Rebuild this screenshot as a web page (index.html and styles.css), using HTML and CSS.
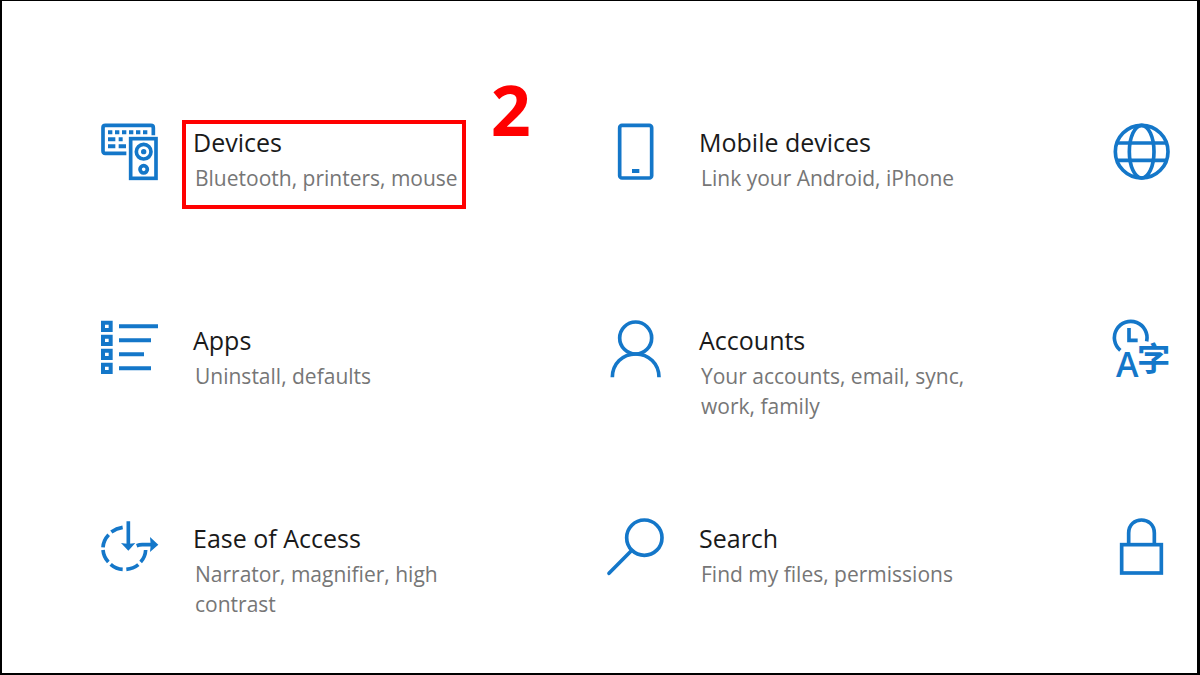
FILE: index.html
```
<!DOCTYPE html>
<html lang="en">
<head>
  <meta charset="UTF-8" />
  <meta name="viewport" content="width=device-width, initial-scale=1.0"/>
  <title>Settings</title>
  <link rel="stylesheet" href="styles.css">
</head>
<body>
  <main class="settings">
    <a class="category" href="#devices">
      <svg class="icon" viewBox="30 36 180 180" aria-hidden="true">
        <path d="M109 130H46q-7 0-7-7V53q0-7 7-7h137q7 0 7 7v23"/>
        <path d="M54 67h13M75 67h13M96 67h13M117 67h13M138 67h13M159 67h13M54 88h22M86 88h12M54 109h22M86 109h22" stroke-width="12"/>
        <rect x="122" y="86" width="76" height="119"/>
        <circle cx="161" cy="125" r="22"/>
        <circle class="solid" cx="161" cy="125" r="8"/>
        <circle cx="161" cy="178" r="11"/>
      </svg>
      <span class="text highlight">
        <span class="name">Devices</span>
        <span class="info">Bluetooth, printers, mouse</span>
        <strong class="step">2</strong>
      </span>
    </a>

    <a class="category" href="#mobile">
      <svg class="icon" viewBox="18 36 180 180" aria-hidden="true">
        <rect x="59" y="46" width="96" height="158" rx="7"/>
        <path d="M96 183h22" stroke-width="12"/>
      </svg>
      <span class="text">
        <span class="name">Mobile devices</span>
        <span class="info">Link your Android, iPhone</span>
      </span>
    </a>

    <a class="category" href="#network" aria-label="Network">
      <svg class="icon" viewBox="36 36 180 180" aria-hidden="true">
        <circle cx="125" cy="125" r="79"/>
        <ellipse cx="125" cy="125" rx="37" ry="79"/>
        <path d="M49 99h152M49 151h152"/>
      </svg>
    </a>

    <a class="category" href="#apps">
      <svg class="icon" viewBox="30 30 180 180" aria-hidden="true">
        <path d="M39 38h23v22H39zM39 80h23v22H39zM39 122h23v22H39zM39 164h23v22H39z" stroke-width="12"/>
        <path d="M87 49h117M87 91h96M87 133h75M87 175h96" stroke-width="12"/>
      </svg>
      <span class="text">
        <span class="name">Apps</span>
        <span class="info">Uninstall, defaults</span>
      </span>
    </a>

    <a class="category" href="#accounts">
      <svg class="icon" viewBox="18 30 180 180" aria-hidden="true">
        <circle cx="107" cy="84" r="48"/>
        <path d="M37 202c0-41 31-70 70-70s70 29 70 70"/>
      </svg>
      <span class="text">
        <span class="name">Accounts</span>
        <span class="info">Your accounts, email, sync, work, family</span>
      </span>
    </a>

    <a class="category" href="#language" aria-label="Time and Language">
      <svg class="icon" viewBox="36 30 180 180" aria-hidden="true">
        <path d="M61 121A49 49 0 1 1 140 94M87 54v37h26"/>
        <text class="latin" x="82" y="202">A</text>
        <text class="hanzi" x="161" y="182">字</text>
      </svg>
    </a>

    <a class="category" href="#access">
      <svg class="icon" viewBox="30 39 180 180" aria-hidden="true">
        <path d="M98 67Q79 70 64 81M56 89Q40 106 39 127M39 135Q41 156 55 171M62 178Q78 192 98 193M109 193Q130 191 145 179M152 171Q166 156 167 135"/>
        <path d="M115 49v71M140 122q8-3 17-3h34"/>
        <path class="solid" d="M93 114q22 4 43 0l-21 23zM180 96l25 23-25 22q4-22 0-45z"/>
      </svg>
      <span class="text">
        <span class="name">Ease of Access</span>
        <span class="info">Narrator, magnifier, high contrast</span>
      </span>
    </a>

    <a class="category" href="#search">
      <svg class="icon" viewBox="18 39 180 180" aria-hidden="true">
        <circle cx="133" cy="98" r="53"/>
        <path d="M94 137L27 205" stroke-linecap="round"/>
      </svg>
      <span class="text">
        <span class="name">Search</span>
        <span class="info">Find my files, permissions</span>
      </span>
    </a>

    <a class="category" href="#privacy" aria-label="Privacy">
      <svg class="icon" viewBox="36 39 180 180" aria-hidden="true">
        <rect x="65" y="119" width="119" height="85"/>
        <path d="M86 117V84c0-52 77-52 77 0v33"/>
      </svg>
    </a>
  </main>
</body>
</html>
```

FILE: styles.css
```
* { margin: 0; padding: 0; box-sizing: border-box; }

body {
  background: #fff;
  color: #1a1a1a;
  font-family: "Open Sans", "Noto Sans", sans-serif;
}

/* Settings grid, last column only has room for the icon */
.settings {
  display: grid;
  grid-template-columns: 1fr 1fr 60px;
  grid-auto-rows: minmax(101px, auto);
  row-gap: 97px;
  min-height: 100vh;
  padding: 121px 25px 40px 98px;
  border: solid #000;
  border-width: 1px 3px 2px 2px;
  align-content: start;
}

.category {
  display: flex;
  align-items: flex-start;
  gap: 33px;
  color: inherit;
  text-decoration: none;
}

/* Icons */
.icon {
  flex: none;
  width: 60px;
  height: 60px;
  overflow: visible;
  fill: none;
  stroke: #1477c9;
  stroke-width: 11;
}
.icon .solid, .icon text { fill: #1477c9; stroke: none; }
.icon text { text-anchor: middle; }
.latin { font-size: 102px; font-weight: 600; }
.hanzi { font-family: "Noto Sans CJK SC", sans-serif; font-size: 100px; font-weight: 700; }

/* Labels */
.text { position: relative; max-width: 280px; padding-top: 2px; }
.name, .info { display: block; }
.name { margin-bottom: 3px; font-size: 25px; line-height: 36px; }
.info { padding-left: 2px; color: #767676; font-size: 21px; line-height: 30px; }

/* Red frame and step number over the label */
.highlight::after {
  content: "";
  position: absolute;
  inset: -2px -8px -16px -11px;
  border: 4px solid #f00;
}
.step {
  position: absolute;
  left: 100%;
  top: -48px;
  margin-left: 33px;
  color: #f00;
  font-size: 70px;
  line-height: 70px;
}
```
